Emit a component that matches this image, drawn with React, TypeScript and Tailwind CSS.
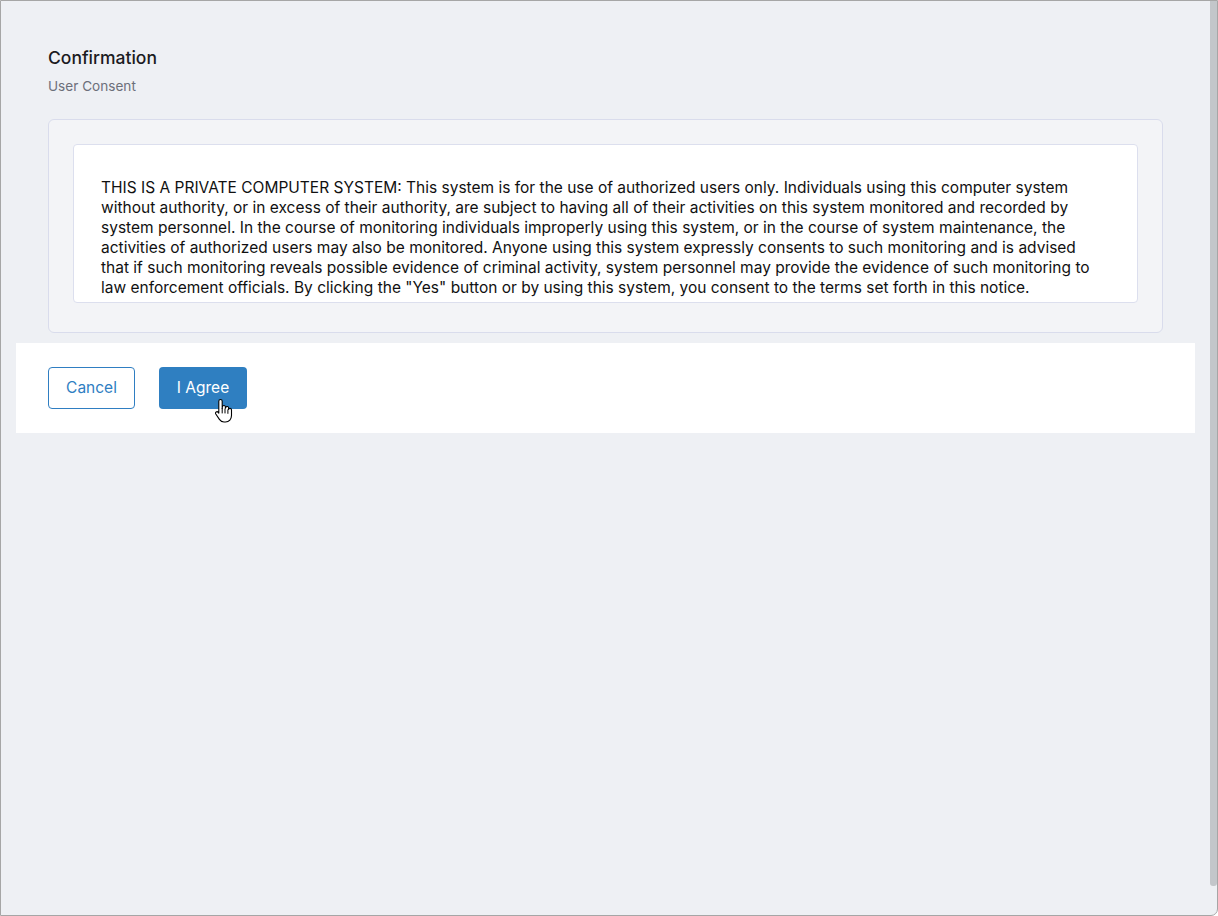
import React from 'react'

// line breaks follow the reference layout
const NOTICE_LINES = [
  'THIS IS A PRIVATE COMPUTER SYSTEM: This system is for the use of authorized users only. Individuals using this computer system',
  'without authority, or in excess of their authority, are subject to having all of their activities on this system monitored and recorded by',
  'system personnel. In the course of monitoring individuals improperly using this system, or in the course of system maintenance, the',
  'activities of authorized users may also be monitored. Anyone using this system expressly consents to such monitoring and is advised',
  'that if such monitoring reveals possible evidence of criminal activity, system personnel may provide the evidence of such monitoring to',
  'law enforcement officials. By clicking the "Yes" button or by using this system, you consent to the terms set forth in this notice.',
]

function HandCursor() {
  return (
    <svg className="absolute left-[213px] top-[397px] w-[20px] h-[26px]" viewBox="0 0 20 26" fill="none">
      <path
        d="M6.5 1.5c1 0 1.7.7 1.7 1.7v7.2l.2-1.6c.2-.9.9-1.4 1.7-1.3.8.1 1.3.8 1.3 1.6v1.2l.3-.8c.3-.8 1-1.2 1.8-1 .7.2 1.1.9 1.1 1.6v1.3l.3-.5c.4-.6 1.1-.8 1.7-.5.6.3.9.9.9 1.6v5.6c0 3.4-2.4 6.4-6 6.4H10c-2 0-3.5-1-4.6-2.6L1.8 16c-.5-.8-.3-1.7.4-2.1.7-.4 1.5-.2 2 .4l.6.8V3.2c0-1 .7-1.7 1.7-1.7z"
        fill="#fff"
        stroke="#000"
        strokeWidth="1.1"
        strokeLinejoin="round"
      />
      <path d="M8.2 10.5v4.5M11 11v4M13.9 11.8v3.6" stroke="#000" strokeWidth="1" strokeLinecap="round" />
    </svg>
  )
}

export default function App() {
  return (
    <div className="w-[1218px] h-[916px] bg-white font-['Inter',sans-serif]">
      <div className="relative w-full h-full flex border border-[#a6a6a6] rounded-br-[7px] overflow-hidden bg-[#eef0f4]">
        <div className="flex-1 px-[15px]">
          {/* header */}
          <div className="px-[32px] pt-[46px]">
            <h1 className="text-[17.5px] leading-[22px] font-medium text-[#1b1b1f]">Confirmation</h1>
            <p className="mt-[9px] text-[13.6px] leading-[16px] text-[#6c6f7a]">User Consent</p>
          </div>

          {/* consent panel */}
          <div className="px-[32px] pt-[25px]">
            <div className="bg-[#f3f4f7] border border-[#d9dcec] rounded-[6px] px-[24px] pt-[24px] pb-[29px]">
              <div className="bg-white border border-[#dcdfee] rounded-[4px] pl-[27px] pr-[8px] pt-[33px] pb-[4px]">
                <p className="text-[15.5px] leading-[20px] text-[#111111] whitespace-nowrap">
                  {NOTICE_LINES.map((line, i) => (
                    <React.Fragment key={i}>
                      {line}
                      {i < NOTICE_LINES.length - 1 && <br />}
                    </React.Fragment>
                  ))}
                </p>
              </div>
            </div>
          </div>

          {/* actions */}
          <div className="mt-[10px] bg-white px-[32px] py-[24px] flex gap-[24px]">
            <button className="h-[42px] w-[87px] rounded-[4px] border border-[#2f7ec2] text-[#2f7ec2] text-[15.5px] bg-white">
              Cancel
            </button>
            <button className="h-[42px] w-[88px] rounded-[4px] bg-[#2f7fc1] text-white text-[15.5px]">I Agree</button>
          </div>
        </div>

        {/* scrollbar */}
        <div className="w-[7px] flex flex-col">
          <div className="h-[885px] bg-[#c3c6ca] rounded-b-[3px]" />
        </div>

        <HandCursor />
      </div>
    </div>
  )
}
